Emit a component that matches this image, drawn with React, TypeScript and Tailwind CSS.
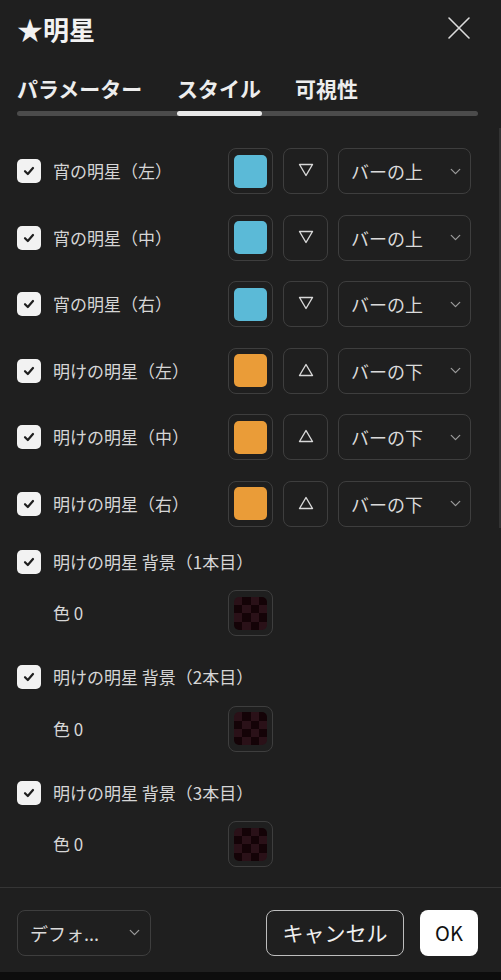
import { ChevronDown } from "lucide-react";

const FONT = { fontFamily: '"Noto Sans CJK JP", "Noto Sans", sans-serif' };

type StyleRow = { label: string; color: string; up: boolean; pos: string };

const styleRows: StyleRow[] = [
  { label: "宵の明星（左）", color: "bg-[#5bbad7]", up: false, pos: "バーの上" },
  { label: "宵の明星（中）", color: "bg-[#5bbad7]", up: false, pos: "バーの上" },
  { label: "宵の明星（右）", color: "bg-[#5bbad7]", up: false, pos: "バーの上" },
  { label: "明けの明星（左）", color: "bg-[#ea9c38]", up: true, pos: "バーの下" },
  { label: "明けの明星（中）", color: "bg-[#ea9c38]", up: true, pos: "バーの下" },
  { label: "明けの明星（右）", color: "bg-[#ea9c38]", up: true, pos: "バーの下" },
];

const bgRows = ["明けの明星 背景（1本目）", "明けの明星 背景（2本目）", "明けの明星 背景（3本目）"];

function Check() {
  return (
    <div className="flex h-6 w-6 shrink-0 items-center justify-center rounded-[5px] bg-[#f2f2f2]">
      <svg width="14" height="14" viewBox="0 0 14 14" fill="none">
        <path d="M3 7.2 L5.8 10 L11 4" stroke="#1f1f1f" strokeWidth="2.2" strokeLinecap="round" strokeLinejoin="round" />
      </svg>
    </div>
  );
}

function Swatch({ children }: { children: React.ReactNode }) {
  return (
    <div className="flex h-[46px] w-[45px] shrink-0 items-center justify-center rounded-lg border border-[#3e3e3e]">
      {children}
    </div>
  );
}

function Checker() {
  const cells = Array.from({ length: 16 }, (_, i) => i);
  return (
    <div className="grid h-[33px] w-[33px] grid-cols-4 overflow-hidden rounded-[5px]">
      {cells.map((i) => {
        const dark = (Math.floor(i / 4) + (i % 4)) % 2 === 1;
        return <div key={i} className={dark ? "bg-[#140307]" : "bg-[#2a1118]"} />;
      })}
    </div>
  );
}

function Triangle({ up }: { up: boolean }) {
  return (
    <svg width="16" height="14" viewBox="0 0 16 14" fill="none" className="mt-[-2px]">
      {up ? (
        <path d="M8 1.5 L14.5 12.5 L1.5 12.5 Z" stroke="#d8d8d8" strokeWidth="1.4" strokeLinejoin="round" />
      ) : (
        <path d="M1.5 1.5 L14.5 1.5 L8 12.5 Z" stroke="#d8d8d8" strokeWidth="1.4" strokeLinejoin="round" />
      )}
    </svg>
  );
}

export default function App() {
  return (
    <div className="relative flex h-[980px] w-[501px] flex-col overflow-hidden bg-[#1f1f1f] text-[#d6d6d6]" style={FONT}>
      {/* header */}
      <div className="flex h-[56px] items-center justify-between pl-[17px] pr-[30px] pt-[1px]">
        <h1 className="text-[26px] font-bold leading-8 text-[#f2f2f2]">★明星</h1>
        <svg width="24" height="24" viewBox="0 0 24 24" fill="none" className="mt-[-2px]">
          <path d="M2 2 L22 22 M22 2 L2 22" stroke="#dcdcdc" strokeWidth="1.6" strokeLinecap="round" />
        </svg>
      </div>

      {/* tabs */}
      <div className="mt-[19px] pl-[17px] pr-[23px]">
        <div className="flex h-[26px] items-center text-[21px] font-bold leading-[26px] text-[#ededed]">
          <span className="w-[160px]">パラメーター</span>
          <span className="w-[118px]">スタイル</span>
          <span>可視性</span>
        </div>
        <div className="mt-[10px] flex h-[5px] rounded-full bg-[#4b4b4b]">
          <div className="ml-[160px] h-[5px] w-[85px] rounded-full bg-[#e8e8e8]" />
        </div>
      </div>

      {/* scrollbar thumb */}
      <div className="absolute right-0 top-[128px] h-[400px] w-[2px] bg-[#333333]" />

      {/* rows */}
      <div className="mt-[32px] flex flex-col gap-[20.6px] pl-[17px]">
        {styleRows.map((r) => (
          <div key={r.label} className="flex h-[46px] items-center">
            <Check />
            <span className="ml-3 w-[175px] text-[17px] leading-6">{r.label}</span>
            <Swatch>
              <div className={`h-[33px] w-[33px] rounded-[5px] ${r.color}`} />
            </Swatch>
            <div className="ml-[10px]">
              <Swatch>
                <Triangle up={r.up} />
              </Swatch>
            </div>
            <div className="ml-[10px] flex h-[46px] w-[133px] items-center justify-between rounded-lg border border-[#3e3e3e] pl-3 pr-[6px]">
              <span className="text-[18px] leading-6 text-[#dadada]">{r.pos}</span>
              <ChevronDown size={17} strokeWidth={1.8} className="text-[#9a9a9a]" />
            </div>
          </div>
        ))}
      </div>

      <div className="mt-[6px] flex flex-col pl-[17px]">
        {bgRows.map((label, i) => (
          <div key={label} className={i === 0 ? "mt-[17px]" : "mt-[29px]"}>
            <div className="flex h-6 items-center">
              <Check />
              <span className="ml-3 text-[17px] leading-6">{label}</span>
            </div>
            <div className="mt-[16.5px] flex h-[46px] items-center">
              <span className="ml-9 w-[175px] text-[17px] leading-6">色 0</span>
              <Swatch>
                <Checker />
              </Swatch>
            </div>
          </div>
        ))}
      </div>

      {/* footer */}
      <div className="mt-[19.5px] h-px bg-[#353535]" />
      <div className="flex h-[84px] items-start justify-between pl-[17px] pr-[23px] pt-[22px]">
        <div className="flex h-[46px] w-[134px] items-center justify-between rounded-lg border border-[#3e3e3e] pl-3 pr-[7px]">
          <span className="text-[18px] leading-6 text-[#dadada]">デフォ...</span>
          <ChevronDown size={17} strokeWidth={1.8} className="text-[#9a9a9a]" />
        </div>
        <div className="flex gap-[16px]">
          <button className="flex h-[46px] w-[138px] items-center justify-center rounded-lg border border-[#bdbdbd] text-[21px] text-[#f0f0f0]">
            キャンセル
          </button>
          <button className="flex h-[46px] w-[58px] items-center justify-center rounded-lg bg-white text-[20px] text-[#111111]">
            OK
          </button>
        </div>
      </div>

      {/* page beneath */}
      <div className="flex-1 bg-[#0d0d0d]" />
    </div>
  );
}
